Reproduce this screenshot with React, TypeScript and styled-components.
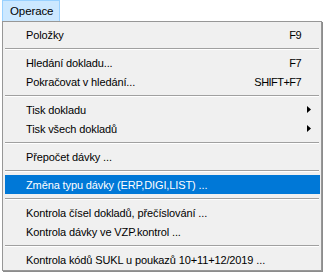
import React from "react";
import styled, { createGlobalStyle } from "styled-components";

const GlobalStyle = createGlobalStyle`
  html, body { margin: 0; padding: 0; background: #ffffff; }
  body { font-family: "Liberation Sans", Arial, sans-serif; }
`;

const Page = styled.div`
  width: 323px;
  height: 272px;
  overflow: hidden;
  position: relative;
  background: #ffffff;
`;

const MenuBar = styled.div`
  display: flex;
  height: 21px;
  padding-left: 2px;
  background: #ffffff;
`;

const MenuTitle = styled.div`
  box-sizing: border-box;
  height: 21px;
  width: 58px;
  padding: 0 0 0 7px;
  display: flex;
  align-items: center;
  background: #cce8ff;
  border: 1px solid #99d1ff;
  border-bottom: none;
  font-size: 11.5px;
  letter-spacing: -0.1px;
  color: #000;
`;

const Popup = styled.div`
  box-sizing: border-box;
  margin-left: 2px;
  width: 320px;
  background: #f0f0f0;
  border: 1px solid #979797;
  box-shadow: 1px 1px 0 #8c8c8c;
  padding: 3px 1px 1px 2px;
  display: flex;
  flex-direction: column;
`;

const Item = styled.div<{ $active?: boolean }>`
  height: 19px;
  display: flex;
  align-items: center;
  padding: 0 19px 0 21px;
  font-size: 11px;
  letter-spacing: -0.12px;
  color: ${(p) => (p.$active ? "#ffffff" : "#000000")};
  background: ${(p) => (p.$active ? "#0078d7" : "transparent")};
  white-space: nowrap;
`;

const Label = styled.span`
  flex: 1;
`;

const Shortcut = styled.span`
  text-align: right;
  letter-spacing: -0.55px;
`;

const Arrow = styled.svg`
  width: 4px;
  height: 7px;
  margin-right: -10px;
`;

const Separator = styled.div`
  height: 9px;
  display: flex;
  align-items: center;
  padding: 0 1px 0 0;
  &::before {
    content: "";
    display: block;
    flex: 1;
    height: 0;
    border-top: 1px solid #a0a0a0;
    border-bottom: 1px solid #ffffff;
  }
`;

type Entry =
  | { kind: "item"; label: string; shortcut?: string; sub?: boolean; active?: boolean }
  | { kind: "sep" };

const entries: Entry[] = [
  { kind: "item", label: "Položky", shortcut: "F9" },
  { kind: "sep" },
  { kind: "item", label: "Hledání dokladu...", shortcut: "F7" },
  { kind: "item", label: "Pokračovat v hledání...", shortcut: "SHIFT+F7" },
  { kind: "sep" },
  { kind: "item", label: "Tisk dokladu", sub: true },
  { kind: "item", label: "Tisk všech dokladů", sub: true },
  { kind: "sep" },
  { kind: "item", label: "Přepočet dávky ..." },
  { kind: "sep" },
  { kind: "item", label: "Změna typu dávky (ERP,DIGI,LIST) ...", active: true },
  { kind: "sep" },
  { kind: "item", label: "Kontrola čísel dokladů, přečíslování ..." },
  { kind: "item", label: "Kontrola dávky ve VZP.kontrol ..." },
  { kind: "sep" },
  { kind: "item", label: "Kontrola kódů SUKL u poukazů 10+11+12/2019 ..." },
];

export default function App() {
  return (
    <>
      <GlobalStyle />
      <Page>
        <MenuBar>
          <MenuTitle>Operace</MenuTitle>
        </MenuBar>
        <Popup>
          {entries.map((e, i) =>
            e.kind === "sep" ? (
              <Separator key={i} />
            ) : (
              <Item key={i} $active={e.active}>
                <Label>{e.label}</Label>
                {e.shortcut && <Shortcut>{e.shortcut}</Shortcut>}
                {e.sub && (
                  <Arrow viewBox="0 0 4 7">
                    <path d="M0 0 L4 3.5 L0 7 Z" fill="#000" />
                  </Arrow>
                )}
              </Item>
            )
          )}
        </Popup>
      </Page>
    </>
  );
}
